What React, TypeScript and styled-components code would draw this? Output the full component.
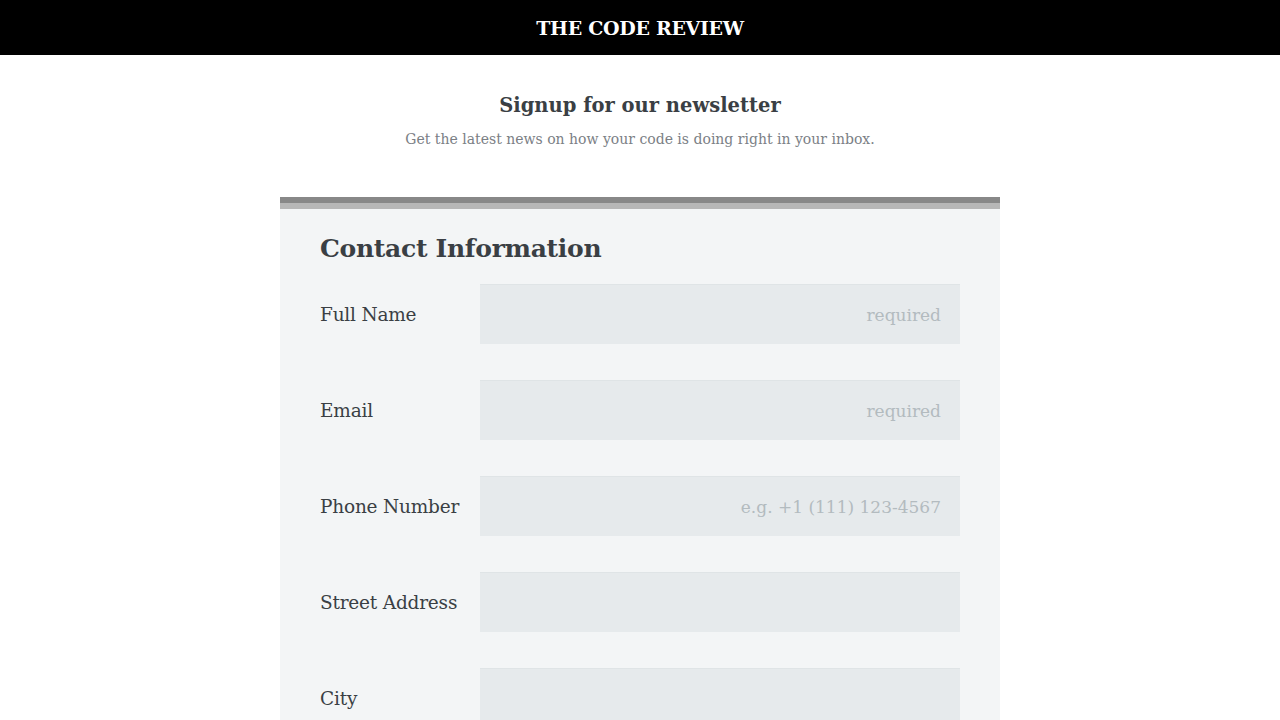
import React from "react";
import styled, { createGlobalStyle } from "styled-components";

const Global = createGlobalStyle`
  html, body { margin: 0; padding: 0; background: #ffffff; }
  body { font-family: "DejaVu Serif", "Liberation Serif", serif; color: #3a3f44; }
  * { box-sizing: border-box; }
`;

const Page = styled.div`
  width: 1280px;
  min-height: 720px;
  display: flex;
  flex-direction: column;
  align-items: center;
`;

const Header = styled.header`
  width: 100%;
  height: 55px;
  background: #000;
  display: flex;
  align-items: center;
  justify-content: center;
`;

const Brand = styled.h1`
  margin: 0;
  color: #fff;
  font-size: 19px;
  font-weight: 700;
  letter-spacing: -0.3px;
`;

const Intro = styled.section`
  display: flex;
  flex-direction: column;
  align-items: center;
  padding-top: 37px;
`;

const Title = styled.h2`
  margin: 0;
  font-size: 19.5px;
  font-weight: 700;
  color: #3a3f44;
  line-height: 28px;
`;

const Subtitle = styled.p`
  margin: 9px 0 0;
  font-size: 14px;
  color: #7b8085;
  line-height: 20px;
`;

const Card = styled.form`
  margin-top: 48px;
  width: 720px;
  background: #f3f5f6;
  border-top: 6px solid #888888;
  box-shadow: inset 0 6px 0 #b7b7b7;
  padding: 28px 40px 0;
`;

const CardTitle = styled.h3`
  margin: 0 0 17px;
  font-size: 25px;
  font-weight: 700;
  color: #3a3f44;
  line-height: 36px;
  letter-spacing: -0.3px;
`;

const Rows = styled.div`
  display: flex;
  flex-direction: column;
  gap: 36px;
`;

const Row = styled.div`
  display: grid;
  grid-template-columns: 160px 480px;
  align-items: center;
`;

const Label = styled.label`
  font-size: 18.5px;
  color: #3a3f44;
  letter-spacing: -0.2px;
`;

const Input = styled.input`
  height: 60px;
  width: 480px;
  border: none;
  border-top: 1px solid #dfe4e6;
  background: #e6eaec;
  padding: 0 19px;
  text-align: right;
  font-family: inherit;
  font-size: 17px;
  color: #3a3f44;
  outline: none;
  &::placeholder { color: #b3bbbf; }
`;

const fields = [
  { label: "Full Name", placeholder: "required" },
  { label: "Email", placeholder: "required" },
  { label: "Phone Number", placeholder: "e.g. +1 (111) 123-4567" },
  { label: "Street Address", placeholder: "" },
  { label: "City", placeholder: "" },
];

export default function App() {
  return (
    <>
      <Global />
      <Page>
        <Header>
          <Brand>THE CODE REVIEW</Brand>
        </Header>
        <Intro>
          <Title>Signup for our newsletter</Title>
          <Subtitle>Get the latest news on how your code is doing right in your inbox.</Subtitle>
        </Intro>
        <Card onSubmit={(e) => e.preventDefault()}>
          <CardTitle>Contact Information</CardTitle>
          <Rows>
            {fields.map((f) => (
              <Row key={f.label}>
                <Label>{f.label}</Label>
                <Input placeholder={f.placeholder} />
              </Row>
            ))}
          </Rows>
        </Card>
      </Page>
    </>
  );
}
